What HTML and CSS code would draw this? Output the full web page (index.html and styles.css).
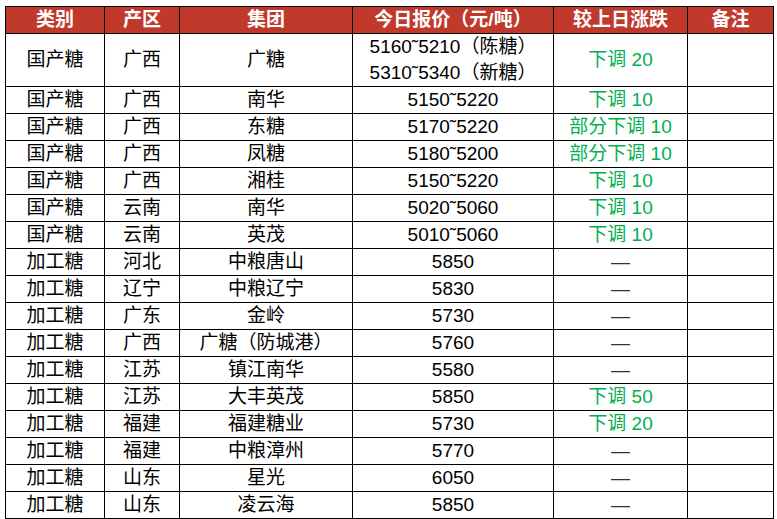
FILE: index.html
```html
<!DOCTYPE html>
<html lang="zh-CN">
<head>
<meta charset="utf-8">
<link rel="stylesheet" href="styles.css">
</head>
<body>
<table class="price-table">
  <colgroup>
    <col class="c1"><col class="c2"><col class="c3"><col class="c4"><col class="c5"><col class="c6">
  </colgroup>
  <thead>
    <tr><th>类别</th><th>产区</th><th>集团</th><th>今日报价（元/吨）</th><th>较上日涨跌</th><th>备注</th></tr>
  </thead>
  <tbody>
    <tr class="tall"><td>国产糖</td><td>广西</td><td>广糖</td><td><div>5160˜5210（陈糖）</div><div>5310˜5340（新糖）</div></td><td class="down">下调 20</td><td></td></tr>
    <tr><td>国产糖</td><td>广西</td><td>南华</td><td>5150˜5220</td><td class="down">下调 10</td><td></td></tr>
    <tr><td>国产糖</td><td>广西</td><td>东糖</td><td>5170˜5220</td><td class="down">部分下调 10</td><td></td></tr>
    <tr><td>国产糖</td><td>广西</td><td>凤糖</td><td>5180˜5200</td><td class="down">部分下调 10</td><td></td></tr>
    <tr><td>国产糖</td><td>广西</td><td>湘桂</td><td>5150˜5220</td><td class="down">下调 10</td><td></td></tr>
    <tr><td>国产糖</td><td>云南</td><td>南华</td><td>5020˜5060</td><td class="down">下调 10</td><td></td></tr>
    <tr><td>国产糖</td><td>云南</td><td>英茂</td><td>5010˜5060</td><td class="down">下调 10</td><td></td></tr>
    <tr><td>加工糖</td><td>河北</td><td>中粮唐山</td><td>5850</td><td class="flat">—</td><td></td></tr>
    <tr><td>加工糖</td><td>辽宁</td><td>中粮辽宁</td><td>5830</td><td class="flat">—</td><td></td></tr>
    <tr><td>加工糖</td><td>广东</td><td>金岭</td><td>5730</td><td class="flat">—</td><td></td></tr>
    <tr><td>加工糖</td><td>广西</td><td>广糖（防城港）</td><td>5760</td><td class="flat">—</td><td></td></tr>
    <tr><td>加工糖</td><td>江苏</td><td>镇江南华</td><td>5580</td><td class="flat">—</td><td></td></tr>
    <tr><td>加工糖</td><td>江苏</td><td>大丰英茂</td><td>5850</td><td class="down">下调 50</td><td></td></tr>
    <tr><td>加工糖</td><td>福建</td><td>福建糖业</td><td>5730</td><td class="down">下调 20</td><td></td></tr>
    <tr><td>加工糖</td><td>福建</td><td>中粮漳州</td><td>5770</td><td class="flat">—</td><td></td></tr>
    <tr><td>加工糖</td><td>山东</td><td>星光</td><td>6050</td><td class="flat">—</td><td></td></tr>
    <tr><td>加工糖</td><td>山东</td><td>凌云海</td><td>5850</td><td class="flat">—</td><td></td></tr>
  </tbody>
</table>
</body>
</html>
```

FILE: styles.css
```css
html, body {
  margin: 0;
  padding: 0;
  background: #ffffff;
}
body {
  padding: 6px 0 0 5px;
  font-family: "Liberation Sans", "Noto Sans CJK SC", sans-serif;
  font-size: 19px;
  color: #000;
}
.price-table {
  border-collapse: collapse;
  table-layout: fixed;
  width: 768px;
}
.c1 { width: 99px; }
.c2 { width: 75px; }
.c3 { width: 173px; }
.c4 { width: 201px; }
.c5 { width: 134px; }
.c6 { width: 86px; }
.price-table th,
.price-table td {
  border: 1px solid #000;
  padding: 0;
  text-align: center;
  vertical-align: middle;
  height: 26px;
  line-height: 26px;
  white-space: nowrap;
}
.price-table th {
  background: #c0392b;
  color: #fff;
  font-weight: bold;
}
.price-table tr.tall td {
  height: 52px;
}
.down {
  color: #00b050;
}
.flat {
  color: #333;
}
```
